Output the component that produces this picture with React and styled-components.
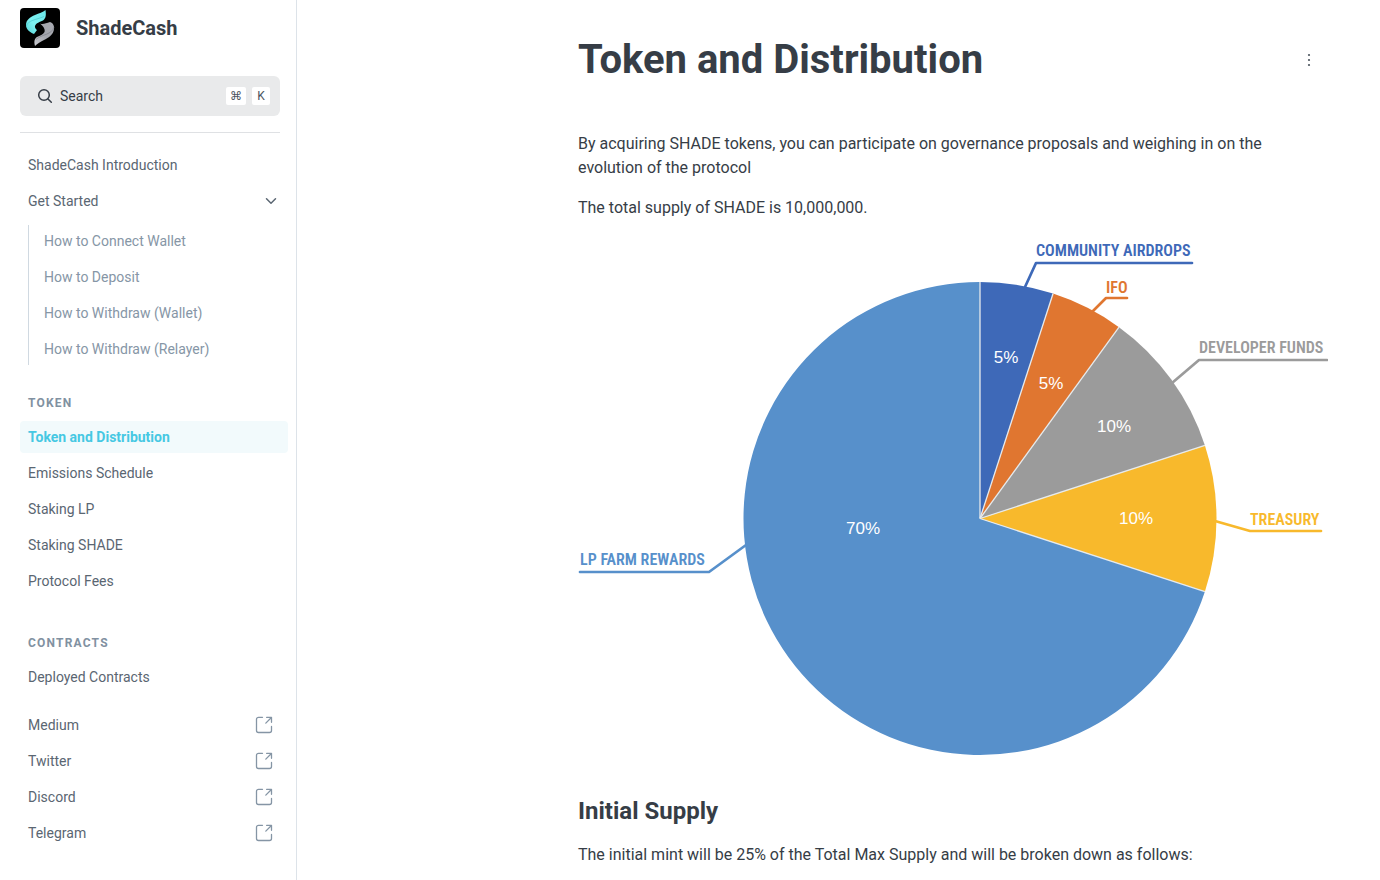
import React from "react";
import styled, { createGlobalStyle, css } from "styled-components";

const GlobalStyle = createGlobalStyle`
  * { box-sizing: border-box; }
  body {
    margin: 0;
    background: #fff;
    color: #363d46;
    font-family: Roboto, "Liberation Sans", sans-serif;
    font-size: 16px;
    line-height: 24px;
  }
`;

const Page = styled.div`
  display: flex;
  align-items: stretch;
  min-height: 100vh;
`;

const Sidebar = styled.aside`
  flex: 0 0 297px;
  padding: 8px 8px 0 20px;
  border-right: 1px solid #dde3e9;
`;

const Brand = styled.a`
  display: flex;
  align-items: center;
  gap: 16px;
  color: #363d46;
  font-size: 20px;
  font-weight: 700;
  text-decoration: none;
`;

const SidebarTop = styled.div`
  margin-right: 8px;
  padding-bottom: 16px;
  border-bottom: 1px solid #dfe1e4;
`;

const SearchButton = styled.button`
  display: flex;
  align-items: center;
  gap: 6px;
  width: 100%;
  height: 40px;
  margin-top: 28px;
  padding: 0 10px 0 16px;
  border: 0;
  border-radius: 6px;
  background: #e9eaeb;
  color: #363d46;
  font: inherit;
  font-size: 14px;
  text-align: left;
`;

const SearchLabel = styled.span`
  flex: 1;
`;

const Key = styled.kbd`
  min-width: 18px;
  height: 18px;
  padding: 0 4px;
  border-radius: 2px;
  background: #fff;
  color: #4c555e;
  font-family: Roboto, "DejaVu Sans", sans-serif;
  font-size: 12px;
  line-height: 18px;
  text-align: center;
`;

const Nav = styled.nav`
  padding-top: 16px;
`;

const NavList = styled.ul`
  display: flex;
  flex-direction: column;
  gap: 4px;
  margin: 0;
  padding: 0 0 8px;
  list-style: none;
  ${(p) =>
    p.$nested &&
    css`
      margin: 8px 0 0 8px;
      padding: 0 0 0 7px;
      border-left: 1px solid #d0d9e1;
    `}
`;

const NavLink = styled.a`
  display: flex;
  align-items: center;
  justify-content: space-between;
  height: 32px;
  padding: 0 8px;
  border-radius: 4px;
  font-size: 14px;
  text-decoration: none;
  color: ${(p) => (p.$muted ? "#8696a6" : "#5a6672")};
  ${(p) =>
    p.$active &&
    css`
      background: #f2fafc;
      color: #46c8e3;
      font-weight: 700;
    `}
`;

const GroupTitle = styled.h2`
  margin: ${(p) => (p.$first ? "22px" : "30px")} 0 10px;
  padding-left: 8px;
  color: #8191a1;
  font-size: 12px;
  font-weight: 700;
  line-height: 16px;
  letter-spacing: 0.1em;
  text-transform: uppercase;
`;

const LinkGroup = styled.div`
  padding-top: 8px;
`;

const ExternalSvg = styled.svg`
  margin-right: 8px;
  color: #8595a5;
`;

const Main = styled.main`
  flex: 1;
  min-width: 0;
  padding: 32px 52px 0;
`;

const Article = styled.article`
  max-width: 750px;
  margin-left: auto;
`;

const TitleRow = styled.header`
  display: flex;
  align-items: center;
  justify-content: space-between;
  padding-right: 7px;
  margin-bottom: 44px;
`;

const Title = styled.h1`
  margin: 0;
  font-size: 40px;
  font-weight: 700;
  line-height: 56px;
`;

const MenuButton = styled.button`
  display: grid;
  place-items: center;
  width: 24px;
  height: 24px;
  padding: 0;
  border: 0;
  background: none;
  color: #4c555e;
`;

const Paragraph = styled.p`
  margin: 0 0 16px;
`;

const Chart = styled.svg`
  display: block;
  width: 100%;
  height: auto;
  margin-bottom: 24px;
`;

const ChartLabel = styled.text`
  font-family: "Roboto Condensed", "Liberation Sans Narrow", sans-serif;
  font-size: 16px;
  font-weight: 600;
`;

const ChartValue = styled.text`
  fill: #fff;
  font-family: "Liberation Sans", sans-serif;
  font-size: 17px;
  text-anchor: middle;
`;

const SectionTitle = styled.h2`
  margin: 0 0 16px;
  font-size: 24px;
  font-weight: 700;
  line-height: 32px;
`;

const Logo = () => (
  <svg width="40" height="40" viewBox="0 0 40 40" aria-hidden="true">
    <defs>
      <linearGradient id="cyan" x1="0" y1="1" x2="1" y2="0">
        <stop offset="0" stopColor="#55d3d6" />
        <stop offset="0.4" stopColor="#7df0f0" />
        <stop offset="1" stopColor="#6be8ea" />
      </linearGradient>
      <linearGradient id="silver" x1="0" y1="1" x2="1" y2="0">
        <stop offset="0" stopColor="#c9cad0" />
        <stop offset="0.5" stopColor="#a2a4ac" />
        <stop offset="1" stopColor="#a9abb2" />
      </linearGradient>
    </defs>
    <rect width="40" height="40" rx="4" fill="#000" />
    <path d="M25.500 2C26 6 26.500 10 23 12.500C20 14 16 15 15 18C14.500 20 17 22 17 22L14 26C9 24 6 21 6 17C6 12 10 9 15 7C19 5.500 23 4 25.500 2Z" fill="url(#cyan)" />
    <path d="M6.500 18C8 12 16 12 24 8.500" fill="none" stroke="#42bfc4" strokeWidth="0.600" />
    <path d="M20 15.500C23 17 26 15 30 14C33 15 34.500 18 34 21C33.500 27 28 30 24 32C20 34 17 36 15 38C14 34 14 31 17 29C20 27.500 23 27 24.500 24C25.500 21 23 18 20 15.500Z" fill="url(#silver)" />
    <path d="M34 19C32 27 22 26 16 31.500" fill="none" stroke="#777982" strokeWidth="0.600" />
  </svg>
);

const SearchIcon = () => (
  <svg width="18" height="18" viewBox="0 0 18 18" fill="none" stroke="currentColor" strokeWidth="1.500" strokeLinecap="round" aria-hidden="true">
    <circle cx="8" cy="8" r="5.300" />
    <path d="M12 12L15.300 15.300" />
  </svg>
);

const ChevronIcon = () => (
  <svg width="18" height="18" viewBox="0 0 18 18" fill="none" stroke="currentColor" strokeWidth="1.500" strokeLinecap="round" strokeLinejoin="round" aria-hidden="true">
    <path d="M4.500 6.800L9 11.200L13.500 6.800" />
  </svg>
);

const ExternalIcon = () => (
  <ExternalSvg width="16" height="16" viewBox="0 0 16 16" overflow="visible" fill="none" stroke="currentColor" strokeWidth="1.300" strokeLinecap="round" strokeLinejoin="round" aria-hidden="true">
    <path d="M6.500 0.300H2.500A2 2 0 0 0 0.500 2.300V13.500A2 2 0 0 0 2.500 15.500H13.500A2 2 0 0 0 15.500 13.500V9.500M10.600 0.300H15.500V5.300M15.400 0.500L9.800 6.100" />
  </ExternalSvg>
);

const MoreIcon = () => (
  <svg width="18" height="18" viewBox="0 0 18 18" fill="currentColor" aria-hidden="true">
    <circle cx="9" cy="4" r="1.100" />
    <circle cx="9" cy="9" r="1.100" />
    <circle cx="9" cy="14" r="1.100" />
  </svg>
);

const CENTER = { x: 402, y: 282.5 };
const RADIUS = 236.5;

const slices = [
  { label: "COMMUNITY AIRDROPS", percent: 5, color: "#3e69b8", line: "447,51 458,27 614,27", text: [458, 20], value: [428, 127] },
  { label: "IFO", percent: 5, color: "#e07630", line: "514,76 528,62 549,62", text: [528, 57], value: [473, 153] },
  { label: "DEVELOPER FUNDS", percent: 10, color: "#9b9b9b", line: "594,147 621,124 749,124", text: [621, 117], value: [536, 196] },
  { label: "TREASURY", percent: 10, color: "#f8b92c", line: "637,285 672,295 743,295", text: [672, 289], value: [558, 288] },
  { label: "LP FARM REWARDS", percent: 70, color: "#5790cb", line: "2,336 131,336 168,309", text: [2, 329], value: [285, 298] },
];

const pointAt = (percent) => {
  const angle = (percent / 100) * Math.PI * 2;
  return `${CENTER.x + RADIUS * Math.sin(angle)} ${CENTER.y - RADIUS * Math.cos(angle)}`;
};

function DistributionChart() {
  let start = 0;
  const drawn = slices.map((slice) => {
    const from = start;
    start += slice.percent;
    return { ...slice, from, to: start };
  });
  return (
    <Chart viewBox="0 0 750 535" role="img" aria-label="SHADE token distribution">
      {drawn.map((s) => (
        <g key={s.label}>
          <path
            d={`M${CENTER.x} ${CENTER.y}L${pointAt(s.from)}A${RADIUS} ${RADIUS} 0 ${s.percent > 50 ? 1 : 0} 1 ${pointAt(s.to)}Z`}
            fill={s.color}
          />
          <polyline points={s.line} fill="none" stroke={s.color} strokeWidth="2.700" strokeLinecap="round" strokeLinejoin="round" />
          <ChartLabel x={s.text[0]} y={s.text[1]} fill={s.color}>{s.label}</ChartLabel>
        </g>
      ))}
      {drawn.map((s) => (
        <path key={s.label} d={`M${CENTER.x} ${CENTER.y}L${pointAt(s.from)}`} stroke="#e6eaec" strokeWidth="1.300" />
      ))}
      {drawn.map((s) => (
        <ChartValue key={s.label} x={s.value[0]} y={s.value[1]}>{s.percent}%</ChartValue>
      ))}
    </Chart>
  );
}

const startedPages = ["How to Connect Wallet", "How to Deposit", "How to Withdraw (Wallet)", "How to Withdraw (Relayer)"];
const tokenPages = ["Token and Distribution", "Emissions Schedule", "Staking LP", "Staking SHADE", "Protocol Fees"];
const socialLinks = ["Medium", "Twitter", "Discord", "Telegram"];

export default function App() {
  return (
    <>
      <GlobalStyle />
      <Page>
        <Sidebar>
          <SidebarTop>
            <Brand href="#">
              <Logo />
              ShadeCash
            </Brand>
            <SearchButton type="button">
              <SearchIcon />
              <SearchLabel>Search</SearchLabel>
              <Key>⌘</Key>
              <Key>K</Key>
            </SearchButton>
          </SidebarTop>
          <Nav>
            <NavList>
              <li><NavLink href="#">ShadeCash Introduction</NavLink></li>
              <li>
                <NavLink href="#">Get Started <ChevronIcon /></NavLink>
                <NavList $nested>
                  {startedPages.map((name) => (
                    <li key={name}><NavLink href="#" $muted>{name}</NavLink></li>
                  ))}
                </NavList>
              </li>
            </NavList>
            <GroupTitle $first>Token</GroupTitle>
            <NavList>
              {tokenPages.map((name, i) => (
                <li key={name}><NavLink href="#" $active={i === 0}>{name}</NavLink></li>
              ))}
            </NavList>
            <GroupTitle>Contracts</GroupTitle>
            <NavList>
              <li><NavLink href="#">Deployed Contracts</NavLink></li>
            </NavList>
            <LinkGroup>
              <NavList>
                {socialLinks.map((name) => (
                  <li key={name}><NavLink href="#">{name} <ExternalIcon /></NavLink></li>
                ))}
              </NavList>
            </LinkGroup>
          </Nav>
        </Sidebar>
        <Main>
          <Article>
            <TitleRow>
              <Title>Token and Distribution</Title>
              <MenuButton type="button" aria-label="Page actions"><MoreIcon /></MenuButton>
            </TitleRow>
            <Paragraph>
              By acquiring SHADE tokens, you can participate on governance proposals and weighing in on the evolution of the protocol
            </Paragraph>
            <Paragraph>The total supply of SHADE is 10,000,000.</Paragraph>
            <DistributionChart />
            <SectionTitle>Initial Supply</SectionTitle>
            <Paragraph>The initial mint will be 25% of the Total Max Supply and will be broken down as follows:</Paragraph>
          </Article>
        </Main>
      </Page>
    </>
  );
}
